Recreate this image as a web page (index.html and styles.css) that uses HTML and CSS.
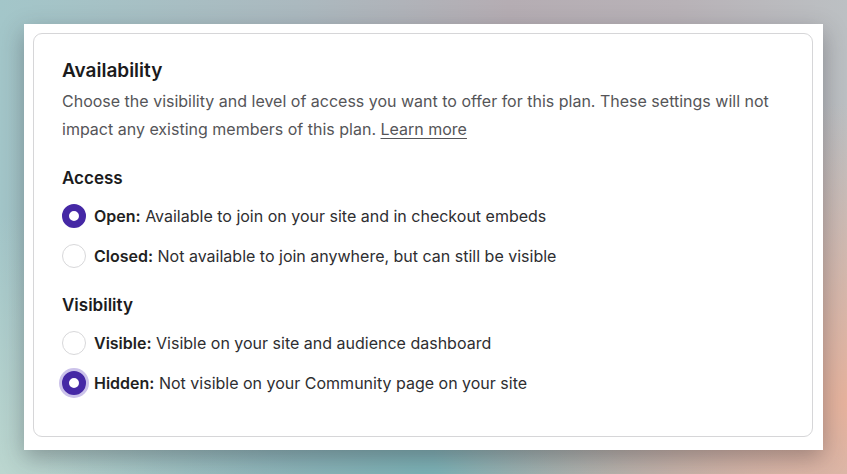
FILE: index.html
```html
<!DOCTYPE html>
<html lang="en">
<head>
<meta charset="utf-8">
<title>Availability</title>
<link rel="stylesheet" href="styles.css">
</head>
<body>
<div class="panel">
  <section class="card">
    <h2 class="title">Availability</h2>
    <p class="desc">Choose the visibility and level of access you want to offer for this plan. These settings will not impact any existing members of this plan. <a href="#" class="link">Learn more</a></p>

    <h3 class="group-title">Access</h3>
    <div class="options">
      <label class="option"><span class="radio checked"></span><span class="label"><b>Open:</b> Available to join on your site and in checkout embeds</span></label>
      <label class="option"><span class="radio"></span><span class="label"><b>Closed:</b> Not available to join anywhere, but can still be visible</span></label>
    </div>

    <h3 class="group-title group-second">Visibility</h3>
    <div class="options">
      <label class="option"><span class="radio"></span><span class="label"><b>Visible:</b> Visible on your site and audience dashboard</span></label>
      <label class="option"><span class="radio checked focused"></span><span class="label"><b>Hidden:</b> Not visible on your Community page on your site</span></label>
    </div>
  </section>
</div>
</body>
</html>
```
FILE: styles.css
```css
html, body {
  margin: 0;
  padding: 0;
}
body {
  width: 847px;
  height: 474px;
  overflow: hidden;
  font-family: Inter, "Noto Sans", sans-serif;
  background:
    radial-gradient(ellipse 420px 300px at 100% 85%, rgba(232,178,155,0.95), rgba(232,178,155,0) 100%),
    radial-gradient(ellipse 380px 200px at 50% 100%, rgba(120,178,182,0.95), rgba(120,178,182,0) 100%),
    radial-gradient(ellipse 300px 260px at 0% 100%, rgba(190,216,208,0.9), rgba(190,216,208,0) 100%),
    linear-gradient(90deg, #a3c6c9 0%, #abb9bf 35%, #b5adb3 60%, #b8b2b7 80%, #bcc0c3 100%);
  padding: 24px;
  box-sizing: border-box;
}
.panel {
  background: #fff;
  height: 426px;
  padding: 9px 10px 13px 9px;
  box-sizing: border-box;
  box-shadow: 0 8px 22px rgba(40,40,50,0.35);
}
.card {
  border: 1px solid #d6d6d8;
  border-radius: 9px;
  height: 100%;
  box-sizing: border-box;
  padding: 25px 28px 0 28px;
}
.title {
  margin: 0;
  font-size: 19px;
  line-height: 24px;
  font-weight: 600;
  color: #1b1b1d;
}
.desc {
  margin: 4px 0 0;
  font-size: 16px;
  line-height: 28px;
  color: #555558;
}
.link {
  color: #555558;
  text-decoration: underline;
  text-underline-offset: 3px;
}
.group-title {
  margin: 24px 0 0;
  font-size: 17px;
  line-height: 22px;
  font-weight: 600;
  color: #1b1b1d;
}
.group-second {
  margin-top: 26px;
}
.options {
  margin-top: 15px;
  display: flex;
  flex-direction: column;
  gap: 16px;
}
.option {
  display: flex;
  align-items: center;
  gap: 8px;
  height: 24px;
}
.radio {
  width: 24px;
  height: 24px;
  border-radius: 50%;
  border: 1px solid #d8d8da;
  box-sizing: border-box;
  background: #fff;
  flex: none;
}
.radio.checked {
  border: 7px solid #4528a5;
}
.radio.focused {
  box-shadow: 0 0 0 3px #cbc2ea;
}
.label {
  font-size: 16px;
  line-height: 20px;
  color: #2e2e31;
}
.label b {
  font-weight: 600;
  color: #1f1f22;
}
```
